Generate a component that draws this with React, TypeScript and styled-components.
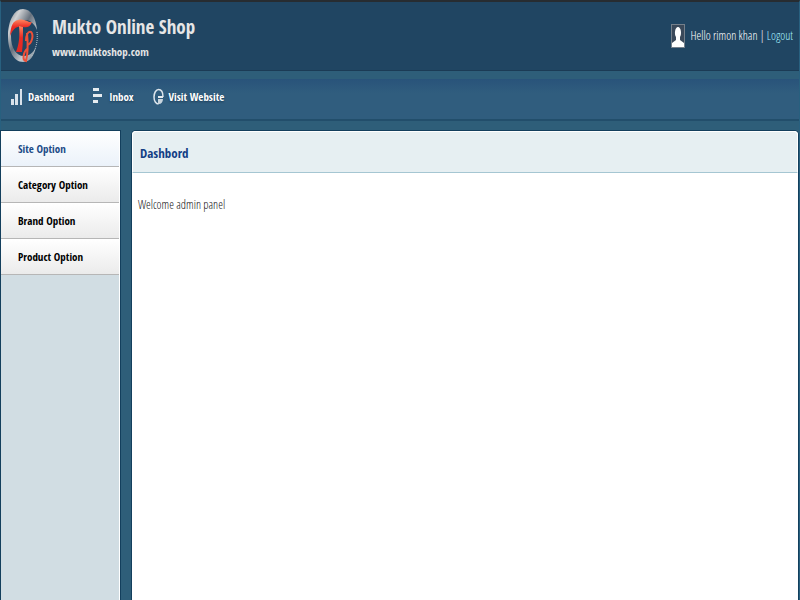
import React from "react";
import styled, { createGlobalStyle } from "styled-components";

const Global = createGlobalStyle`
  * { box-sizing: border-box; }
  html { height: 100%; }
  body {
    margin: 0;
    min-height: 100%;
    display: flex;
    background: #2e5e79;
    color: #111;
    font-family: "Open Sans Condensed", "Roboto Condensed", "Liberation Sans", Arial, sans-serif;
    font-size: 12px;
    line-height: 20px;
  }
  #root { flex: 1; display: flex; min-width: 0; }
`;

const lightFont = `"Open Sans Condensed Light", "Roboto Condensed", "Liberation Sans", Arial, sans-serif`;

const Page = styled.div`
  flex: 1;
  min-width: 0;
  display: flex;
  flex-direction: column;
  border-top: 2px solid #272c31;
  border-left: 1px solid #28607f;
  border-right: 1px solid #28607f;
`;

const Header = styled.header`
  display: flex;
  align-items: center;
  justify-content: space-between;
  height: 69px;
  padding: 0 6px;
  background: #204562;
  border-bottom: 1px solid #1b3b55;
  color: #fff;
`;

const Brand = styled.div`
  display: flex;
  align-items: center;
  gap: 13px;
`;

const SiteName = styled.h1`
  margin: 0;
  padding-top: 4px;
  color: #e6e6e6;
  font-size: 19px;
  line-height: 28px;
  font-weight: bold;
`;

const SiteUrl = styled.p`
  margin: 0;
  color: #e6e6e6;
  font-size: 11px;
  line-height: 22px;
  font-weight: bold;
`;

const User = styled.div`
  display: flex;
  align-items: center;
  gap: 6px;
  font-family: ${lightFont};
`;

const LogoutLink = styled.a`
  color: #a5f0ff;
  text-decoration: none;
`;

const Nav = styled.nav`
  display: flex;
  align-items: center;
  gap: 18px;
  height: 42px;
  margin-top: 8px;
  padding: 0 10px 4px;
  background: linear-gradient(#29537a, #305d7e 35%, #305d7e);
  border-bottom: 2px solid #224e6b;
`;

const NavLink = styled.a`
  display: flex;
  align-items: center;
  gap: 5px;
  color: #fff;
  font-size: 11px;
  font-weight: bold;
  text-decoration: none;
  text-shadow: 0 1px 2px #1b3b55;
`;

const Main = styled.div`
  flex: 1;
  display: grid;
  grid-template-columns: 119px minmax(0, 1fr);
  gap: 12px;
  margin: 10px 1px 0 0;
`;

const Sidebar = styled.aside`
  background: #d1dde3;
  border-right: 1px solid #fff;
  box-shadow: 0 0 0 1px #133f5d;
`;

const Menu = styled.ul`
  list-style: none;
  margin: 0;
  padding: 0;
`;

const MenuLink = styled.a<{ $active?: boolean }>`
  display: block;
  height: 36px;
  padding: 0 17px;
  line-height: 36px;
  font-size: 11px;
  font-weight: bold;
  text-decoration: none;
  color: ${(p) => (p.$active ? "#204a86" : "#000")};
  background: ${(p) => (p.$active ? "linear-gradient(#fff, #ebf2fa)" : "linear-gradient(#fff, #ebebeb)")};
  border-bottom: 1px solid #b6b6b6;
`;

const Panel = styled.main`
  background: #fff;
  border-radius: 4px 4px 0 0;
  box-shadow: 0 0 0 1px #133f5d;
`;

const PanelTitle = styled.h2`
  margin: 0;
  padding: 0 7px;
  height: 42px;
  line-height: 42px;
  font-size: 13px;
  font-weight: bold;
  color: #143f85;
  background: #e6eff2;
  border: 1px solid #fff;
  border-bottom-color: #a5c6d2;
  border-radius: 4px 4px 0 0;
`;

const PanelBody = styled.div`
  padding: 22px 6px;
  font-family: ${lightFont};
`;

const Logo = () => (
  <svg width="32" height="56" viewBox="0 0 32 56" aria-hidden="true">
    <defs>
      <linearGradient id="steel" x1="0" y1="0" x2="1" y2="1">
        <stop offset="0" stopColor="#666c75" />
        <stop offset=".22" stopColor="#d0d2d4" />
        <stop offset=".45" stopColor="#68727e" />
        <stop offset=".7" stopColor="#c5cbd0" />
        <stop offset="1" stopColor="#657582" />
      </linearGradient>
      <linearGradient id="flame" x1="0" y1="0" x2="0" y2="1">
        <stop offset="0" stopColor="#ff865f" />
        <stop offset=".45" stopColor="#e92b24" />
        <stop offset="1" stopColor="#e02a24" />
      </linearGradient>
    </defs>
    <path d="M16 1C7 1 1 13 1 28s6 26 15 26c7 0 11-6 13-15C26 45 22 48 17 48 9 48 4 40 4 28S9 13 18 12c6 0 10 5 12 10C29 10 24 1 16 1Z" fill="url(#steel)" />
    <path d="M3 28c1-11 3-15 8-16 7-2 10 3 14 2-2 5-5 6-9 5-6-1-9 0-13 9Z" fill="url(#flame)" />
    <path d="M12 18c1 10 0 18-3 26h6c1-9 1-17 1-25Z" fill="url(#flame)" />
    <path d="M19 33c0-6 2-10 5-9 3 3 1 12-4 13M20 25c1 10 1 20-1 28-4-1-3-9 2-13" fill="none" stroke="#ed5038" strokeWidth="2" />
    <path d="M30 24c1 9-1 18-6 25" fill="none" stroke="#b7c4cc" strokeWidth="1" strokeDasharray="1 1" />
  </svg>
);

const Avatar = () => (
  <svg width="14" height="24" viewBox="0 0 14 24" aria-hidden="true">
    <rect x=".5" y=".5" width="13" height="23" fill="#3a495a" stroke="#75808b" />
    <path d="M1 23v-4l4-3v-3C3 10 4 3 7 3s4 7 2 10v3l4 3v4Z" fill="#fff" />
  </svg>
);

const BarsIcon = () => (
  <svg width="12" height="18" viewBox="0 0 12 18" fill="#d9e2ea" aria-hidden="true">
    <path d="M0 11h3v6H0ZM4 6h3v11H4ZM9 1h2v16H9Z" />
  </svg>
);

const InboxIcon = () => (
  <svg width="12" height="18" viewBox="0 0 12 18" fill="#e6ecf0" aria-hidden="true">
    <path d="M1 0h6v3H1ZM1 6h9v3H1ZM1 12h5v3H1Z" />
  </svg>
);

const SiteIcon = () => (
  <svg width="12" height="18" viewBox="0 0 12 18" aria-hidden="true">
    <path d="M11 9C11 4 9 1.500 6.500 1.500S2 5 2 9s2 7 4.500 7" fill="none" stroke="#dce5ec" strokeWidth="1.5" />
    <path d="M6 8h5v2H6Z" fill="#e6ecf0" />
    <path d="M6 11h5c0 3-2 5-4 5H6Z" fill="#c9d5de" />
  </svg>
);

const navItems = [
  { label: "Dashboard", Icon: BarsIcon },
  { label: "Inbox", Icon: InboxIcon },
  { label: "Visit Website", Icon: SiteIcon },
];

const menuItems = ["Site Option", "Category Option", "Brand Option", "Product Option"];

export default function App() {
  return (
    <>
      <Global />
      <Page>
        <Header>
          <Brand>
            <Logo />
            <div>
              <SiteName>Mukto Online Shop</SiteName>
              <SiteUrl>www.muktoshop.com</SiteUrl>
            </div>
          </Brand>
          <User>
            <Avatar />
            <span>
              Hello rimon khan | <LogoutLink href="#logout">Logout</LogoutLink>
            </span>
          </User>
        </Header>
        <Nav>
          {navItems.map(({ label, Icon }) => (
            <NavLink key={label} href="#">
              <Icon />
              {label}
            </NavLink>
          ))}
        </Nav>
        <Main>
          <Sidebar>
            <Menu>
              {menuItems.map((item, i) => (
                <li key={item}>
                  <MenuLink href="#" $active={i === 0}>{item}</MenuLink>
                </li>
              ))}
            </Menu>
          </Sidebar>
          <Panel>
            <PanelTitle>Dashbord</PanelTitle>
            <PanelBody>Welcome admin panel</PanelBody>
          </Panel>
        </Main>
      </Page>
    </>
  );
}
